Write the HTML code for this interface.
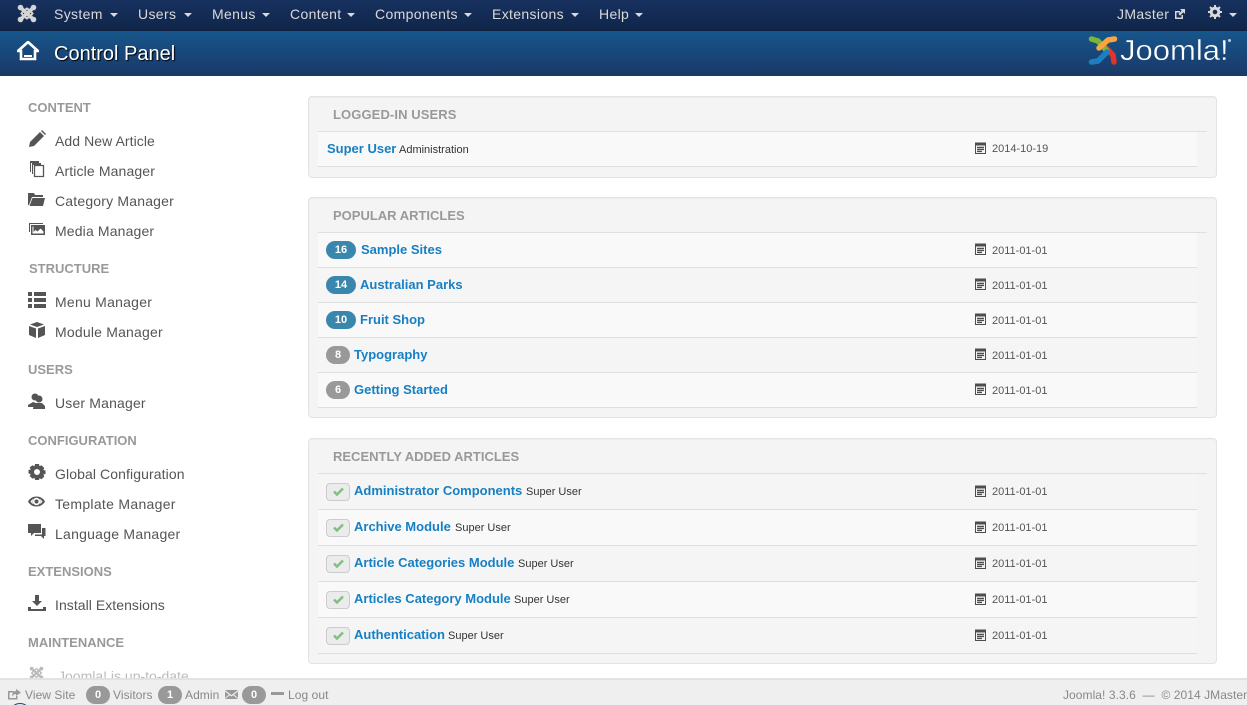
<!DOCTYPE html>
<html><head><meta charset="utf-8"><title>Control Panel</title>
<style>
html,body{margin:0;padding:0;width:1247px;height:705px;overflow:hidden;background:#fff;font-family:"Liberation Sans",Arial,sans-serif;font-size:14px;color:#555}
div,span,a,svg{position:absolute;white-space:nowrap}
#page{left:0;top:0;width:1247px;height:705px;overflow:hidden;background:#fff}
#top{left:0;top:0;width:1247px;height:30px;background:linear-gradient(#17315f,#10264a)}
#hdr{left:0;top:30px;width:1247px;height:46px;background:linear-gradient(#17568c,#1a3867);border-top:1px solid #0c1f3f;box-sizing:border-box}
.n{top:5px;color:#d9d9d9;font-size:14px;line-height:18px;letter-spacing:.35px}
.c{width:0;height:0;border-left:4px solid transparent;border-right:4px solid transparent;border-top:4px solid #d9d9d9;top:13px;position:absolute}
.sh{left:28px;color:#999;font-weight:bold;font-size:13px;line-height:18px;margin-top:1px}
.si{left:55px;color:#555;font-size:14px;line-height:18px}
.ic{left:28px;width:18px;height:18px;fill:#555}
.panel{left:308px;width:909px;background:#f4f4f4;border:1px solid #e3e3e3;border-radius:4px;box-sizing:border-box;box-shadow:inset 0 1px 1px rgba(0,0,0,.03)}
.pt{left:333px;color:#999;font-weight:bold;font-size:13px;line-height:18px;margin-top:1px}
.ln{left:318px;width:889px;height:1px;background:#dfdfdf}
.row{left:318px;width:879px;background:#f9f9f9;border-bottom:1px solid #dedede;box-sizing:border-box}
.row.b{background:#f5f5f5}
.t{color:#1780c4;font-weight:bold;font-size:13px;line-height:18px}
.s{color:#333;font-size:11px;line-height:18px}
.d{left:992px;color:#555;font-size:11px;line-height:18px}
.cal{left:975px;width:11px;height:12px;fill:#4d4d4d}
.bd{left:326px;height:18px;border-radius:9px;color:#fff;font-weight:bold;font-size:11px;line-height:18px;text-align:center}
.blue{background:#3a87ad;width:30px}
.gr{background:#999;width:24px}
.ck{left:326px;width:24px;height:18px;background:#ebebeb;border:1px solid #ccc;border-radius:4px;box-sizing:border-box}
.cm{left:333px;width:11px;height:11px}
#foot{left:0;top:678px;width:1247px;height:27px;background:#efefef;border-top:2px solid #e2e2e2;box-sizing:border-box}
.f{top:687px;color:#888;font-size:12px;line-height:16px;letter-spacing:.06px}
.fb{top:686px;height:18px;border-radius:9px;background:#999;color:#fff;font-weight:bold;font-size:11px;line-height:18px;text-align:center;width:24px}
</style></head><body>
<div id="page">
<svg width="0" height="0" style="left:0;top:0"><defs>
<symbol id="cal" viewBox="0 0 11 12"><path fill-rule="evenodd" d="M0 .5h11V12H0zM1 3.500V11h9V3.500zM2 4.800h7v1.300H2zM2 6.800h7v1.300H2zM2 8.800h5v1.300H2z"/></symbol>
<symbol id="chk" viewBox="0 0 11 11"><path d="M1 5.500l3 3 6-6" fill="none" stroke="#7fbf7f" stroke-width="2.400"/></symbol>
</defs></svg>
<div id="top"></div>
<svg style="left:17px;top:4px;width:20px;height:19px" viewBox="0 0 20 19"><g fill="none" stroke="#d4d4d4" stroke-width="3.600"><path d="M4 4L16 15M16 4L4 15"/><path d="M6.500 7L10 4.500L13.500 7L15.500 9.500L13.500 12L10 14.500L6.500 12L4.500 9.500z" stroke-width="2"/></g><g fill="#d4d4d4"><circle cx="3.500" cy="3.500" r="2.800"/><circle cx="16.500" cy="3.500" r="2.800"/><circle cx="3.500" cy="15.500" r="2.800"/><circle cx="16.500" cy="15.500" r="2.800"/></g></svg>
<a class="n" style="left:54px">System</a><i class="c" style="left:110px"></i>
<a class="n" style="left:138px">Users</a><i class="c" style="left:184px"></i>
<a class="n" style="left:212px">Menus</a><i class="c" style="left:262px"></i>
<a class="n" style="left:290px">Content</a><i class="c" style="left:347px"></i>
<a class="n" style="left:375px">Components</a><i class="c" style="left:464px"></i>
<a class="n" style="left:492px">Extensions</a><i class="c" style="left:571px"></i>
<a class="n" style="left:599px">Help</a><i class="c" style="left:635px"></i>
<a class="n" style="left:1117px">JMaster</a>
<svg style="left:1174px;top:8px;width:12px;height:12px" viewBox="0 0 12 12"><path d="M1 3h5v1.500H2.500v5h5V7H9v4H1zM6 1h5v5L9.300 4.300 6 7.600 4.400 6 7.700 2.700z" fill="#d9d9d9"/></svg>
<svg style="left:1208px;top:5px;width:14px;height:14px" viewBox="0 0 14 14"><circle cx="7" cy="7" r="3.800" fill="none" stroke="#d9d9d9" stroke-width="3"/><path d="M7 0v14M0 7h14M2 2l10 10M12 2L2 12" stroke="#d9d9d9" stroke-width="2" stroke-dasharray="2.500 9 2.500 0"/></svg>
<i class="c" style="left:1229px"></i>

<div id="hdr"></div>
<svg style="left:17px;top:41px;width:22px;height:20px" viewBox="0 0 22 20"><path d="M11 1L1 10h3v8h14v-8h3z" fill="none" stroke="#fff" stroke-width="2.600"/><path d="M7 14h8v2H7z" fill="#fff"/></svg>
<div style="left:54px;top:42px;color:#fff;font-size:20px;line-height:24px;text-shadow:1px 1px 1px #000">Control Panel</div>
<svg style="left:1088px;top:34px;width:30px;height:33px" viewBox="0 0 30 33" fill="none" stroke-width="5.500" stroke-linecap="round" stroke-linejoin="round">
<path d="M26 28L25 21L14 10" stroke="#e6332a"/><path d="M3.500 5L10 7L19 17" stroke="#7ab536"/><path d="M3.500 28L10 27L19 18" stroke="#1c7fc0"/><path d="M26.500 5L20 6L11 14" stroke="#f9a541"/></svg>
<div style="left:1120px;top:33px;color:#fff;font-size:29px;line-height:36px;transform:scaleX(1.07);transform-origin:0 0;-webkit-text-stroke:.4px #17497c">Joomla!</div>
<div style="left:1228px;top:39px;width:3px;height:3px;background:#c8ccd4;border-radius:3px"></div>

<div class="sh" style="top:98px">CONTENT</div>
<svg class="ic" style="top:130px" viewBox="0 0 18 18"><path d="M1 17l1-5L12 2l4 4L6 16zM13 1l1-1 4 4-1 1z"/></svg>
<a class="si" style="top:132px;letter-spacing:.07px">Add New Article</a>
<svg class="ic" style="top:160px" viewBox="0 0 18 18"><path d="M2 1h9v2H3v9H2zM4 3h9v2H5v9H4z"/><path d="M6.500 5.500h9v11h-9z" fill="none" stroke="#555" stroke-width="1.300"/></svg>
<a class="si" style="top:162px;letter-spacing:.13px">Article Manager</a>
<svg class="ic" style="top:190px" viewBox="0 0 18 18"><path d="M0 3h6l1 2h8v2H4L1 15H0zM4.500 8H17l-2 8H1.500z"/></svg>
<a class="si" style="top:192px;letter-spacing:.19px">Category Manager</a>
<svg class="ic" style="top:220px" viewBox="0 0 18 18"><path d="M1 3h14v1H2v8H1z"/><path d="M3 5h14v10H3zM4.500 6.500v7h11v-2l-3-3-3 3-2-1.500-2 2v-5.500z" fill-rule="evenodd"/></svg>
<a class="si" style="top:222px;letter-spacing:.15px">Media Manager</a>

<div class="sh" style="top:259px;left:29px">STRUCTURE</div>
<svg class="ic" style="top:291px" viewBox="0 0 18 18"><path d="M0 1h4v4H0zM6 1h12v4H6zM0 7h4v4H0zM6 7h12v4H6zM0 13h4v4H0zM6 13h12v4H6z"/></svg>
<a class="si" style="top:293px;letter-spacing:.25px">Menu Manager</a>
<svg class="ic" style="top:321px" viewBox="0 0 18 18"><path d="M9 1l7 2.500L9 6 2 3.500zM1 5l7 2.500V17L1 14zM17 5l-7 2.500V17l7-3z"/></svg>
<a class="si" style="top:323px;letter-spacing:.2px">Module Manager</a>

<div class="sh" style="top:360px">USERS</div>
<svg class="ic" style="top:392px" viewBox="0 0 18 18"><circle cx="7" cy="5" r="3.500"/><circle cx="11" cy="7" r="3.500"/><path d="M0 13l5-3 3 1-1 4H0zM5 16l3-5 6 0 3 3 0 3H5z"/></svg>
<a class="si" style="top:394px;letter-spacing:.17px">User Manager</a>

<div class="sh" style="top:431px">CONFIGURATION</div>
<svg class="ic" style="top:463px" viewBox="0 0 18 18"><path fill-rule="evenodd" d="M7 1h4l.5 2.200 2-1 2.800 2.800-1 2 2.200.5v3.500l-2.200.5 1 2-2.800 2.800-2-1L11 17H7l-.5-2.200-2 1L1.700 13l1-2L.5 10.500V7l2.200-.5-1-2L4.500 2.200l2 1zM9 6a3 3 0 100 6 3 3 0 000-6z"/></svg>
<a class="si" style="top:465px;letter-spacing:.1px">Global Configuration</a>
<svg class="ic" style="top:493px" viewBox="0 0 18 18"><path fill-rule="evenodd" d="M0 8.500C2 5 5 3.500 8.500 3.500S15 5 17 8.500C15 12 12 13.500 8.500 13.500S2 12 0 8.500zM8.500 4.800a3.700 3.700 0 100 7.400 3.700 3.700 0 000-7.400zM2.500 8.500c1 1.400 1.800 2.200 3 2.800-1.200-1.800-1.200-3.800 0-5.600-1.200.6-2 1.400-3 2.800zM14.500 8.500c-1-1.400-1.800-2.200-3-2.800 1.200 1.800 1.200 3.800 0 5.600 1.200-.6 2-1.400 3-2.800z"/><circle cx="8.500" cy="8.500" r="2"/></svg>
<a class="si" style="top:495px;letter-spacing:.3px">Template Manager</a>
<svg class="ic" style="top:523px" viewBox="0 0 18 18"><path d="M0 1h13v9H6l-3 3v-3H0z"/><path d="M14 5h3.500v8H16v3l-3-3H7v-1.500h7z"/></svg>
<a class="si" style="top:525px;letter-spacing:.25px">Language Manager</a>

<div class="sh" style="top:562px">EXTENSIONS</div>
<svg class="ic" style="top:594px" viewBox="0 0 18 18"><path d="M7 1h4v6h3l-5 5-5-5h3zM0 13h3v2h12v-2h3v4H0z"/></svg>
<a class="si" style="top:596px;letter-spacing:.05px">Install Extensions</a>

<div class="sh" style="top:633px">MAINTENANCE</div>
<svg style="left:28px;top:666px;width:17px;height:14px" viewBox="0 0 17 16"><g fill="none" stroke="#bbb" stroke-width="2.600"><path d="M3 3L14 13M14 3L3 13"/><path d="M5 6L8.500 3L12 6L14 8L12 10L8.500 13L5 10L3 8z" stroke-width="1.600"/></g><g fill="#bbb"><circle cx="3" cy="3" r="2.200"/><circle cx="14" cy="3" r="2.200"/><circle cx="3" cy="13" r="2.200"/><circle cx="14" cy="13" r="2.200"/></g></svg>
<a class="si" style="top:667px;left:58px;color:#bbb">Joomla! is up-to-date.</a>

<div class="panel" style="top:96px;height:82px"></div>
<div class="pt" style="top:105px;letter-spacing:.1px">LOGGED-IN USERS</div>
<div class="ln" style="top:131px"></div>
<div class="row" style="top:132px;height:35px"></div>
<a class="t" style="left:327px;top:140px">Super User</a><span class="s" style="left:399px;top:141px">Administration</span>
<svg class="cal" style="top:142px"><use href="#cal"/></svg><span class="d" style="top:140px">2014-10-19</span>

<div class="panel" style="top:197px;height:221px"></div>
<div class="pt" style="top:206px">POPULAR ARTICLES</div>
<div class="ln" style="top:232px"></div>
<div class="row" style="top:233px;height:35px"></div>
<div class="row b" style="top:268px;height:35px"></div>
<div class="row" style="top:303px;height:35px"></div>
<div class="row b" style="top:338px;height:35px"></div>
<div class="row" style="top:373px;height:35px"></div>
<span class="bd blue" style="top:241px">16</span><a class="t" style="left:361px;top:241px">Sample Sites</a>
<span class="bd blue" style="top:276px">14</span><a class="t" style="left:360px;top:276px">Australian Parks</a>
<span class="bd blue" style="top:311px">10</span><a class="t" style="left:360px;top:311px">Fruit Shop</a>
<span class="bd gr" style="top:346px">8</span><a class="t" style="left:354px;top:346px">Typography</a>
<span class="bd gr" style="top:381px">6</span><a class="t" style="left:354px;top:381px">Getting Started</a>
<svg class="cal" style="top:243px"><use href="#cal"/></svg><span class="d" style="top:242px">2011-01-01</span>
<svg class="cal" style="top:278px"><use href="#cal"/></svg><span class="d" style="top:277px">2011-01-01</span>
<svg class="cal" style="top:313px"><use href="#cal"/></svg><span class="d" style="top:312px">2011-01-01</span>
<svg class="cal" style="top:348px"><use href="#cal"/></svg><span class="d" style="top:347px">2011-01-01</span>
<svg class="cal" style="top:383px"><use href="#cal"/></svg><span class="d" style="top:382px">2011-01-01</span>

<div class="panel" style="top:438px;height:226px"></div>
<div class="pt" style="top:447px">RECENTLY ADDED ARTICLES</div>
<div class="ln" style="top:473px"></div>
<div class="row b" style="top:474px;height:36px"></div>
<div class="row" style="top:510px;height:36px"></div>
<div class="row b" style="top:546px;height:36px"></div>
<div class="row" style="top:582px;height:36px"></div>
<div class="row b" style="top:618px;height:36px"></div>

<div class="ck" style="top:483px"></div><svg class="cm" style="top:486px"><use href="#chk"/></svg>
<div class="ck" style="top:519px"></div><svg class="cm" style="top:522px"><use href="#chk"/></svg>
<div class="ck" style="top:555px"></div><svg class="cm" style="top:558px"><use href="#chk"/></svg>
<div class="ck" style="top:591px"></div><svg class="cm" style="top:594px"><use href="#chk"/></svg>
<div class="ck" style="top:627px"></div><svg class="cm" style="top:630px"><use href="#chk"/></svg>

<a class="t" style="left:354px;top:482px">Administrator Components</a><span class="s" style="left:526px;top:483px">Super User</span>
<a class="t" style="left:354px;top:518px">Archive Module</a><span class="s" style="left:455px;top:519px">Super User</span>
<a class="t" style="left:354px;top:554px">Article Categories Module</a><span class="s" style="left:518px;top:555px">Super User</span>
<a class="t" style="left:354px;top:590px">Articles Category Module</a><span class="s" style="left:514px;top:591px">Super User</span>
<a class="t" style="left:354px;top:626px">Authentication</a><span class="s" style="left:448px;top:627px">Super User</span>
<svg class="cal" style="top:485px"><use href="#cal"/></svg><span class="d" style="top:483px">2011-01-01</span>
<svg class="cal" style="top:521px"><use href="#cal"/></svg><span class="d" style="top:519px">2011-01-01</span>
<svg class="cal" style="top:557px"><use href="#cal"/></svg><span class="d" style="top:555px">2011-01-01</span>
<svg class="cal" style="top:593px"><use href="#cal"/></svg><span class="d" style="top:591px">2011-01-01</span>
<svg class="cal" style="top:629px"><use href="#cal"/></svg><span class="d" style="top:627px">2011-01-01</span>

<div id="foot"></div>
<div style="left:9px;top:703px;width:22px;height:2px;overflow:hidden"><div style="left:0;top:0;width:22px;height:22px;border:1px solid #1a4a7a;border-radius:50%;box-sizing:border-box"></div></div>
<svg style="left:8px;top:688px;width:13px;height:12px" viewBox="0 0 13 12"><path d="M0 3h6v1.500H1.500V10H8V8h1.500v3.500H0zM8 1l5 3.500L8 8V6C6 6 5 7 4 8.500 4 5.500 5.500 3 8 3z" fill="#999"/></svg>
<a class="f" style="left:25px">View Site</a>
<span class="fb" style="left:86px">0</span><a class="f" style="left:113px">Visitors</a>
<span class="fb" style="left:158px">1</span><a class="f" style="left:185px">Admin</a>
<svg style="left:225px;top:690px;width:13px;height:9px" viewBox="0 0 13 9"><path d="M0 0h13L6.500 5zM0 1.500l4 3L0 8zM13 1.500l-4 3L13 8zM4.800 5.200l1.700 1.300 1.700-1.300L13 9H0z" fill="#999"/></svg>
<span class="fb" style="left:242px">0</span>
<div style="left:271px;top:692px;width:13px;height:3px;background:#999"></div>
<a class="f" style="left:288px">Log out</a>
<a class="f" style="left:1063px">Joomla! 3.3.6 &nbsp;— &nbsp;© 2014 JMaster</a>
</div>
</body></html>
